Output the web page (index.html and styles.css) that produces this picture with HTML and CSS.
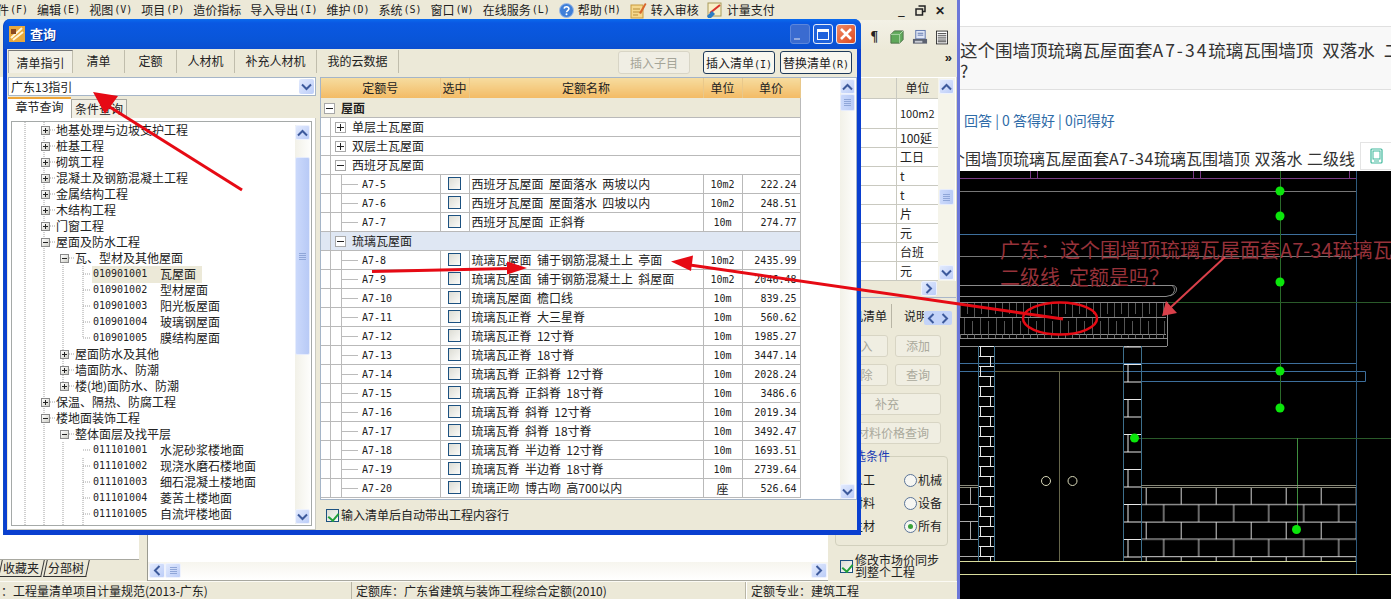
FILE: index.html
```html
<!DOCTYPE html>
<html lang="zh-CN">
<head>
<meta charset="utf-8">
<title>查询</title>
<link rel="stylesheet" href="styles.css">
</head>
<body>
<svg class="defs" width="0" height="0">
  <symbol id="chev-up" viewBox="0 0 11 8"><path d="M1 6.5 5.5 2 10 6.5" fill="none" stroke="#3d5a9c" stroke-width="2"/></symbol>
  <symbol id="chev-down" viewBox="0 0 11 8"><path d="M1 1.5 5.5 6 10 1.5" fill="none" stroke="#3d5a9c" stroke-width="2"/></symbol>
  <symbol id="chev-left" viewBox="0 0 8 11"><path d="M6.5 1 2 5.5 6.5 10" fill="none" stroke="#3d5a9c" stroke-width="2"/></symbol>
  <symbol id="chev-right" viewBox="0 0 8 11"><path d="M1.5 1 6 5.5 1.5 10" fill="none" stroke="#3d5a9c" stroke-width="2"/></symbol>
  <symbol id="grip" viewBox="0 0 9 7"><path d="M1 .5H8M1 2.5H8M1 4.5H8M1 6.5H8" stroke="#8fa6d8" fill="none"/></symbol>
</svg>

<div class="canvas">
  <div class="app">
    <div class="menubar">
      <span class="mi mi-first">件<b class="k">(F)</b></span>
      <span class="mi">编辑<b class="k">(E)</b></span>
      <span class="mi">视图<b class="k">(V)</b></span>
      <span class="mi">项目<b class="k">(P)</b></span>
      <span class="mi">造价指标</span>
      <span class="mi">导入导出<b class="k">(I)</b></span>
      <span class="mi">维护<b class="k">(D)</b></span>
      <span class="mi">系统<b class="k">(S)</b></span>
      <span class="mi">窗口<b class="k">(W)</b></span>
      <span class="mi">在线服务<b class="k">(L)</b></span>
      <span class="mi mi-icon">
        <svg width="15" height="15" viewBox="0 0 15 15"><circle cx="7.5" cy="7.5" r="7" fill="#3f7fd8" stroke="#9dbbe8"/><path d="M5.2 5.6c.3-2.4 4.8-2.4 4.7.2 0 1.700-2.400 1.800-2.400 3.500" fill="none" stroke="#fff" stroke-width="1.600"/><circle cx="7.500" cy="11.300" r="1" fill="#fff"/></svg>
        帮助<b class="k">(H)</b>
      </span>
      <span class="mi mi-icon">
        <svg width="17" height="17" viewBox="0 0 17 17"><rect x="1" y="3" width="12" height="13" fill="#f6d88c" stroke="#c89a3c"/><path d="M3 7h7M3 10h7M3 13h5" stroke="#b98f3a"/><path d="M9 11 15 1l1.500 1L11 12z" fill="#d8662c"/></svg>
        转入审核
      </span>
      <span class="mi mi-icon mi-last">
        <svg width="17" height="17" viewBox="0 0 17 17"><rect x="2" y="1" width="13" height="13" fill="#f8efc8" stroke="#a89a5a"/><path d="M4 11 14 3" stroke="#d8342c" stroke-width="2"/><path d="M1 14 6 9l3 3-4 4H2z" fill="#2c7cc4"/></svg>
        计量支付
      </span>
      <span class="win-btns">
        <span class="wb">_</span>
        <svg width="11" height="11" viewBox="0 0 11 11"><path d="M3.500 1h6.500v5.500H7.500M1 4h6.500v6H1z" fill="none" stroke="#222" stroke-width="1.500"/></svg>
        <span class="wb">✕</span>
      </span>
    </div>
    <div class="toolbar">
      <span class="pilcrow">¶</span>
      <svg width="14" height="16" viewBox="0 0 16 16"><path d="M1 5 5 1h10v10l-4 4H1z" fill="#5fa85a" stroke="#4c6d48"/><path d="M1 5h10v10M11 5l4-4" fill="none" stroke="#b7dcb2"/></svg>
      <svg width="16" height="17" viewBox="0 0 17 17"><rect x="4" y="1" width="10" height="9" fill="#dfe6f5" stroke="#5d75ab"/><path d="M6 4h6M6 6h6" stroke="#5d75ab"/><path d="M1 10h15v5H1z" fill="#5c6270"/><rect x="3" y="12" width="8" height="2" fill="#c9ccd4"/></svg>
      <svg width="12" height="15" viewBox="0 0 14 16"><rect x=".5" y=".5" width="13" height="15" fill="#fff" stroke="#222"/><path d="M2 3.500h10M2 6h10M2 8.500h10M2 11h10M2 13h10" stroke="#222"/></svg>
    </div>
    <div class="subbar"><span class="more">»</span></div>
    <div class="work">
      <div class="leftpane">
        <div class="leftpane-main"></div>
        <div class="doc-tabs"><span class="doc-tab">收藏夹</span><span class="doc-tab">分部树</span></div>
      </div>
      <div class="center">
        <div class="center-main"></div>
        <div class="hbar">
          <span class="sb-btn sb-h"><svg width="8" height="11"><use href="#chev-left"/></svg></span>
          <span class="sb-btn sb-h"><svg width="9" height="7"><use href="#grip"/></svg></span>
          <span class="hbar-fill"></span>
          <span class="sb-btn sb-h"><svg width="8" height="11"><use href="#chev-right"/></svg></span>
        </div>
      </div>
      <div class="rightcol">
        <div class="unit-panel">
          <div class="unit-table">
            <div class="ur ur-h"><span class="uc">单位</span></div>
            <div class="ur ur-tall"><span class="uc uc-num">100m2</span></div>
            <div class="ur"><span class="uc">100延</span></div>
            <div class="ur"><span class="uc">工日</span></div>
            <div class="ur"><span class="uc">t</span></div>
            <div class="ur"><span class="uc">t</span></div>
            <div class="ur"><span class="uc">片</span></div>
            <div class="ur"><span class="uc">元</span></div>
            <div class="ur"><span class="uc">台班</span></div>
            <div class="ur"><span class="uc">元</span></div>
          </div>
          <div class="unit-sb">
            <span class="sb-btn"><svg width="11" height="8"><use href="#chev-up"/></svg></span>
            <span class="sb-thumb unit-thumb"><svg width="9" height="7"><use href="#grip"/></svg></span>
            <span class="sb-fill"></span>
            <span class="sb-btn"><svg width="11" height="8"><use href="#chev-down"/></svg></span>
          </div>
        </div>
        <div class="unit-h"><span class="sb-btn sb-h"><svg width="8" height="11"><use href="#chev-right"/></svg></span></div>
        <div class="rtabs">
          <span class="rtab">工料机清单</span>
          <span class="rtab rtab-2">说明</span>
          <span class="rtab-arrows"><svg width="8" height="11"><use href="#chev-left"/></svg><svg width="8" height="11"><use href="#chev-right"/></svg></span>
        </div>
        <div class="rbtns">
          <span class="rbtn">插入</span><span class="rbtn rbtn-s">添加</span>
          <span class="rbtn">删除</span><span class="rbtn rbtn-s">查询</span>
          <span class="rbtn rbtn-w">补充</span>
          <span class="rbtn rbtn-w">人材料价格查询</span>
        </div>
        <div class="filter">
          <span class="filter-title">筛选条件</span>
          <div class="filter-grid">
            <span>人工</span><span class="radio-item"><i class="radio"></i>机械</span>
            <span>材料</span><span class="radio-item"><i class="radio"></i>设备</span>
            <span>主材</span><span class="radio-item"><i class="radio radio-on"></i>所有</span>
          </div>
        </div>
        <div class="sync"><i class="check check-on"></i><span>修改市场价同步<br>到整个工程</span></div>
      </div>
    </div>
    <div class="status">
      <span class="st st-1">：工程量清单项目计量规范(2013-广东)</span>
      <span class="st st-2">定额库：广东省建筑与装饰工程综合定额(2010)</span>
      <span class="st st-3">定额专业：建筑工程</span>
    </div>
  </div>

  <div class="dialog">
    <div class="titlebar">
      <svg class="title-icon" width="16" height="16" viewBox="0 0 16 16"><rect width="16" height="16" fill="#e8a83c"/><path d="M2 12 13 2M4 14 14 6" stroke="#fff6d8" stroke-width="2"/><rect x="2" y="3" width="5" height="5" fill="#8a4a20"/></svg>
      <span class="title-text">查询</span>
      <span class="title-btns">
        <span class="tbtn tbtn-min"><i></i></span>
        <span class="tbtn tbtn-max"><i></i></span>
        <span class="tbtn tbtn-close">
          <svg width="14" height="14" viewBox="0 0 14 14"><path d="M2 2 12 12M12 2 2 12" stroke="#fff" stroke-width="2.600"/></svg>
        </span>
      </span>
    </div>
    <div class="client">
      <div class="tabbar">
        <span class="tab tab-on">清单指引</span>
        <span class="tab tab-2">清单</span>
        <span class="tab tab-2">定额</span>
        <span class="tab tab-3">人材机</span>
        <span class="tab tab-4">补充人材机</span>
        <span class="tab tab-4">我的云数据</span>
        <span class="btn btn-off">插入子目</span>
        <span class="btn btn-on btn-gap">插入清单<b class="k">(I)</b></span>
        <span class="btn btn-on">替换清单<b class="k">(R)</b></span>
      </div>
      <div class="body">
        <div class="leftcol">
          <div class="combo"><span>广东13指引</span><span class="combo-btn"><svg width="11" height="8"><use href="#chev-down"/></svg></span></div>
          <div class="inner-tabs"><span class="itab itab-on">章节查询</span><span class="itab">条件查询</span></div>
          <div class="page">
            <div class="tree">
              <svg class="tree-lines" width="286" height="405" viewBox="12 122 286 405">
                <path d="M25 122V527M44 122V527M63 265V386M63 442V527M83 266V338M83 458V527" fill="none" stroke="#a0a0a0" stroke-dasharray="1 1"/>
                <path d="M50 130h5M50 146h5M50 162h5M50 178h5M50 194h5M50 210h5M50 226h5M50 242h5M50 402h5M50 418h5M69 258h5M69 354h5M69 370h5M69 386h5M69 434h5M83 274h8M83 290h8M83 306h8M83 322h8M83 338h8M83 450h8M83 466h8M83 482h8M83 498h8M83 514h8" fill="none" stroke="#a0a0a0" stroke-dasharray="1 1"/>
              </svg>
              <div class="tree-list">
                <div class="tr l1"><i class="exp plus"></i><span>地基处理与边坡支护工程</span></div>
                <div class="tr l1"><i class="exp plus"></i><span>桩基工程</span></div>
                <div class="tr l1"><i class="exp plus"></i><span>砌筑工程</span></div>
                <div class="tr l1"><i class="exp plus"></i><span>混凝土及钢筋混凝土工程</span></div>
                <div class="tr l1"><i class="exp plus"></i><span>金属结构工程</span></div>
                <div class="tr l1"><i class="exp plus"></i><span>木结构工程</span></div>
                <div class="tr l1"><i class="exp plus"></i><span>门窗工程</span></div>
                <div class="tr l1"><i class="exp"></i><span>屋面及防水工程</span></div>
                <div class="tr l2"><i class="exp"></i><span>瓦、型材及其他屋面</span></div>
                <div class="tr l3"><span class="leaf leaf-on"><span class="code">010901001</span><span>瓦屋面</span></span></div>
                <div class="tr l3"><span class="leaf"><span class="code">010901002</span><span>型材屋面</span></span></div>
                <div class="tr l3"><span class="leaf"><span class="code">010901003</span><span>阳光板屋面</span></span></div>
                <div class="tr l3"><span class="leaf"><span class="code">010901004</span><span>玻璃钢屋面</span></span></div>
                <div class="tr l3"><span class="leaf"><span class="code">010901005</span><span>膜结构屋面</span></span></div>
                <div class="tr l2"><i class="exp plus"></i><span>屋面防水及其他</span></div>
                <div class="tr l2"><i class="exp plus"></i><span>墙面防水、防潮</span></div>
                <div class="tr l2"><i class="exp plus"></i><span>楼(地)面防水、防潮</span></div>
                <div class="tr l1"><i class="exp plus"></i><span>保温、隔热、防腐工程</span></div>
                <div class="tr l1"><i class="exp"></i><span>楼地面装饰工程</span></div>
                <div class="tr l2"><i class="exp"></i><span>整体面层及找平层</span></div>
                <div class="tr l3"><span class="leaf"><span class="code">011101001</span><span>水泥砂浆楼地面</span></span></div>
                <div class="tr l3"><span class="leaf"><span class="code">011101002</span><span>现浇水磨石楼地面</span></span></div>
                <div class="tr l3"><span class="leaf"><span class="code">011101003</span><span>细石混凝土楼地面</span></span></div>
                <div class="tr l3"><span class="leaf"><span class="code">011101004</span><span>菱苦土楼地面</span></span></div>
                <div class="tr l3"><span class="leaf"><span class="code">011101005</span><span>自流坪楼地面</span></span></div>
              </div>
              <div class="vbar tree-bar">
                <span class="sb-btn"><svg width="11" height="8"><use href="#chev-up"/></svg></span>
                <span class="sb-fill sb-fill-a"></span>
                <span class="sb-thumb tree-thumb"><svg width="9" height="7"><use href="#grip"/></svg></span>
                <span class="sb-fill"></span>
                <span class="sb-btn"><svg width="11" height="8"><use href="#chev-down"/></svg></span>
              </div>
            </div>
          </div>
        </div>
        <div class="rightmain">
          <div class="gridwrap">
            <table class="grid">
              <colgroup><col class="c1"><col class="c2"><col class="c3"><col class="c4"><col class="c5"></colgroup>
              <thead><tr><th>定额号</th><th>选中</th><th>定额名称</th><th>单位</th><th>单价</th></tr></thead>
              <tbody>
                <tr class="g g-root"><td colspan="5"><i class="gexp"></i><b>屋面</b></td></tr>
                <tr class="g"><td colspan="5"><i class="gexp plus"></i>单层土瓦屋面</td></tr>
                <tr class="g"><td colspan="5"><i class="gexp plus"></i>双层土瓦屋面</td></tr>
                <tr class="g"><td colspan="5"><i class="gexp"></i>西班牙瓦屋面</td></tr>
                <tr><td class="no">A7-5</td><td class="cc"><i class="check"></i></td><td class="nm">西班牙瓦屋面  屋面落水  两坡以内</td><td class="un">10m2</td><td class="pr">222.24</td></tr>
                <tr><td class="no">A7-6</td><td class="cc"><i class="check"></i></td><td class="nm">西班牙瓦屋面  屋面落水  四坡以内</td><td class="un">10m2</td><td class="pr">248.51</td></tr>
                <tr><td class="no">A7-7</td><td class="cc"><i class="check"></i></td><td class="nm">西班牙瓦屋面  正斜脊</td><td class="un">10m</td><td class="pr">274.77</td></tr>
                <tr class="g g-sel"><td colspan="5"><i class="gexp"></i>琉璃瓦屋面</td></tr>
                <tr><td class="no">A7-8</td><td class="cc"><i class="check"></i></td><td class="nm">琉璃瓦屋面  铺于钢筋混凝土上  亭面</td><td class="un">10m2</td><td class="pr">2435.99</td></tr>
                <tr><td class="no">A7-9</td><td class="cc"><i class="check"></i></td><td class="nm">琉璃瓦屋面  铺于钢筋混凝土上  斜屋面</td><td class="un">10m2</td><td class="pr">2046.48</td></tr>
                <tr><td class="no">A7-10</td><td class="cc"><i class="check"></i></td><td class="nm">琉璃瓦屋面  檐口线</td><td class="un">10m</td><td class="pr">839.25</td></tr>
                <tr><td class="no">A7-11</td><td class="cc"><i class="check"></i></td><td class="nm">琉璃瓦正脊  大三星脊</td><td class="un">10m</td><td class="pr">560.62</td></tr>
                <tr><td class="no">A7-12</td><td class="cc"><i class="check"></i></td><td class="nm">琉璃瓦正脊  12寸脊</td><td class="un">10m</td><td class="pr">1985.27</td></tr>
                <tr><td class="no">A7-13</td><td class="cc"><i class="check"></i></td><td class="nm">琉璃瓦正脊  18寸脊</td><td class="un">10m</td><td class="pr">3447.14</td></tr>
                <tr><td class="no">A7-14</td><td class="cc"><i class="check"></i></td><td class="nm">琉璃瓦脊  正斜脊  12寸脊</td><td class="un">10m</td><td class="pr">2028.24</td></tr>
                <tr><td class="no">A7-15</td><td class="cc"><i class="check"></i></td><td class="nm">琉璃瓦脊  正斜脊  18寸脊</td><td class="un">10m</td><td class="pr">3486.6</td></tr>
                <tr><td class="no">A7-16</td><td class="cc"><i class="check"></i></td><td class="nm">琉璃瓦脊  斜脊  12寸脊</td><td class="un">10m</td><td class="pr">2019.34</td></tr>
                <tr><td class="no">A7-17</td><td class="cc"><i class="check"></i></td><td class="nm">琉璃瓦脊  斜脊  18寸脊</td><td class="un">10m</td><td class="pr">3492.47</td></tr>
                <tr><td class="no">A7-18</td><td class="cc"><i class="check"></i></td><td class="nm">琉璃瓦脊  半边脊  12寸脊</td><td class="un">10m</td><td class="pr">1693.51</td></tr>
                <tr><td class="no">A7-19</td><td class="cc"><i class="check"></i></td><td class="nm">琉璃瓦脊  半边脊  18寸脊</td><td class="un">10m</td><td class="pr">2739.64</td></tr>
                <tr><td class="no">A7-20</td><td class="cc"><i class="check"></i></td><td class="nm">琉璃正吻  博古吻  高700以内</td><td class="un un-cjk">座</td><td class="pr">526.64</td></tr>
              </tbody>
            </table>
            <div class="vbar grid-bar">
              <span class="sb-btn"><svg width="11" height="8"><use href="#chev-up"/></svg></span>
              <span class="sb-thumb grid-thumb"><svg width="9" height="7"><use href="#grip"/></svg></span>
              <span class="sb-fill"></span>
              <span class="sb-btn"><svg width="11" height="8"><use href="#chev-down"/></svg></span>
            </div>
          </div>
          <div class="footer"><i class="check check-on"></i><span>输入清单后自动带出工程内容行</span></div>
        </div>
      </div>
    </div>
  </div>

  <div class="browser">
    <div class="b-top"></div>
    <div class="b-head">
      <div class="b-line">这个围墙顶琉璃瓦屋面套<span class="lat">A7-34</span>琉璃瓦围墙顶 双落水 二级线</div>
      <div class="b-line">?</div>
    </div>
    <div class="b-stats">回答 | 0 答得好 | 0问得好</div>
    <div class="b-sub">
      <span class="b-subtext">个围墙顶琉璃瓦屋面套<span class="lat-s">A7-34</span>琉璃瓦围墙顶 双落水 二级线</span>
      <span class="b-phone"><svg width="13" height="16" viewBox="0 0 13 16"><rect x="1" y="1" width="11" height="14" rx="1" fill="none" stroke="#3fb89c" stroke-width="1.200"/><rect x="3" y="3" width="7" height="8" fill="none" stroke="#3fb89c"/><path d="M4 13h5" stroke="#3fb89c"/></svg></span>
    </div>
    <div class="cad">
      <svg class="cad-svg" width="431" height="428" viewBox="960 171 431 428">
        <defs>
          <pattern id="brickA" patternUnits="userSpaceOnUse" x="978" y="346" width="17" height="20">
            <path d="M0 .5H17M0 10.500H17M2.500 0V10M12.500 10V20" stroke="#e8e8e8" fill="none"/>
          </pattern>
          <pattern id="brickB" patternUnits="userSpaceOnUse" x="1123" y="364" width="18" height="35">
            <path d="M0 .5H18M0 18H18M5 0V18" stroke="#e8e8e8" fill="none"/>
          </pattern>
          <pattern id="brickW" patternUnits="userSpaceOnUse" x="1145.700" y="487" width="35" height="34.600">
            <path d="M0 .5H35M0 17.500H35M.5 0V17M18 17.500V34.600" stroke="#d4d4d4" fill="none"/>
          </pattern>
          <pattern id="tile1" patternUnits="userSpaceOnUse" x="960" y="303" width="14" height="14">
            <path d="M.5 0V14M7.500 0V11" stroke="#555" fill="none"/>
          </pattern>
          <pattern id="tile2" patternUnits="userSpaceOnUse" x="964" y="318" width="16" height="16">
            <path d="M.5 0V16M8.500 3V16" stroke="#555" fill="none"/>
          </pattern>
          <pattern id="tick" patternUnits="userSpaceOnUse" x="960" y="334" width="7" height="4">
            <path d="M.5 0V4" stroke="#666"/>
          </pattern>
        </defs>
        <g fill="none">
          <path d="M960 178.500H1356M1030.500 171V178M1037.500 171V178M1193.500 171V178M1200.500 171V178M1349.500 171V178M1356.500 171V178" stroke="#7a3a86"/>
          <path d="M960 191.500H1356M960 256.500H1356" stroke="#777"/>
          <path d="M960 234.500H1356M960 363.500H1356M960 371.500H1365.500V381.500H1141" stroke="#3d6f9c"/>
          <path d="M1356.500 171V574" stroke="#2e5a7e"/>
          <path d="M1280.500 171V408" stroke="#2a6a2a"/>
          <path d="M1166 302.500H1391M1134 438.500H1391" stroke="#2a5a2a"/>
          <path d="M1297.500 438V529" stroke="#3f8f3f"/>
          <path d="M995 371.500H1123M1059.500 371V561" stroke="#66664a"/>
          <path d="M960 285.500H1172C1178 285 1178 293 1172 295L1166 296.500H960M1172 285.500C1176 288 1175 293 1170 296" stroke="#8a8a8a"/>
          <path d="M960 302.500H1166M960 317.500H1166M960 334.500H1166M960 338.500H1167M960 346.500H1167M1167.500 302V346" stroke="#8a8a8a"/>
          <rect x="960" y="303" width="206" height="14" fill="url(#tile1)"/>
          <rect x="960" y="318" width="206" height="16" fill="url(#tile2)"/>
          <rect x="960" y="334" width="206" height="4" fill="url(#tick)"/>
          <rect x="978" y="346" width="17" height="215" fill="url(#brickA)"/>
          <rect x="1123" y="346" width="18" height="215" fill="url(#brickB)"/>
          <rect x="1141" y="487" width="215" height="74" fill="url(#brickW)"/>
          <path d="M978.500 346V561M994.500 346V561M1123.500 346V561M1141.500 346V561" stroke="#3d6f8c"/>
          <path d="M960 485.500H978M1141 485.500H1356M960 487.500H978M1141 487.500H1356" stroke="#8a8a7a"/>
          <path d="M960 504.500H978M960 521.500H978M960 539.500H978M960 556.500H978M970.500 487V504M970.500 521V539" stroke="#aaa"/>
          <path d="M960 561.500H1356M960 574.500H1391" stroke="#d8dc9c"/>
          <circle cx="1046" cy="481" r="4.500" stroke="#d8d8b8"/>
          <circle cx="1072.500" cy="481" r="4.500" stroke="#d8d8b8"/>
        </g>
        <g fill="#0be60b">
          <circle cx="1280" cy="191" r="4.500"/><circle cx="1280" cy="216" r="4.500"/><circle cx="1280" cy="282" r="4.500"/><circle cx="1280" cy="371" r="4.500"/><circle cx="1280" cy="408" r="4.500"/><circle cx="1134.500" cy="438" r="4.500"/><circle cx="1296.500" cy="529.500" r="4.500"/>
        </g>
      </svg>
      <div class="cad-note">
        <div class="cad-line">广东：这个围墙顶琉璃瓦屋面套A7-34琉璃瓦</div>
        <div class="cad-line">二级线  定额是吗？</div>
      </div>
    </div>
  </div>

  <svg class="marks" width="1391" height="599" viewBox="0 0 1391 599">
    <g fill="#e60a14" stroke="none">
      <path d="M242 190 105 104" stroke="#e60a14" stroke-width="3" fill="none"/>
      <path d="M93 92 118 96 105 114z"/>
      <path d="M372 271.500 510 268.500" stroke="#e60a14" stroke-width="3" fill="none"/>
      <path d="M527 268 507 261.500 507 274.500z"/>
      <path d="M1063 319 690 265" stroke="#e60a14" stroke-width="3" fill="none"/>
      <path d="M671 261.500 693 255.500 691 271z"/>
    </g>
    <ellipse cx="1060" cy="318.500" rx="37" ry="16" fill="none" stroke="#e60a14" stroke-width="2.500"/>
    <path d="M1225 257 1170 308" stroke="#d9404a" stroke-width="2" fill="none"/>
    <path d="M1162 316 1166 301 1177 313z" fill="#d9404a"/>
  </svg>
</div>
</body>
</html>
```

FILE: styles.css
```css
* { box-sizing: border-box; }
html, body { margin: 0; padding: 0; }
body {
  width: 1391px;
  height: 599px;
  overflow: hidden;
  background: #ece9d8;
  font: 12px/16px "Noto Sans CJK SC", "Liberation Sans", sans-serif;
  color: #222;
}
i { font-style: normal; display: block; flex: none; }
.defs { position: absolute; }
.canvas { position: relative; width: 1391px; height: 599px; overflow: hidden; }

/* underlying application */
.app { width: 957px; height: 599px; display: flex; flex-direction: column; background: #ece9d8; }
.menubar { height: 20px; flex: none; display: flex; align-items: center; gap: 9px; padding-right: 12px; white-space: nowrap; }
.mi { display: flex; align-items: center; }
.mi-first { margin-left: -3px; }
.mi-icon svg { margin-right: 4px; }
.mi-last { margin-left: -2px; }
.k { font: 400 10px/16px "DejaVu Sans Mono", monospace; margin-left: 1px; }
.win-btns { margin-left: auto; display: flex; align-items: center; gap: 8px; font-weight: 700; }
.wb { width: 11px; text-align: center; }
.toolbar { height: 30px; flex: none; display: flex; align-items: center; justify-content: flex-end; gap: 8px; padding: 4px 9px 0 0; background: linear-gradient(#f3f1e6, #ece9d8); }
.pilcrow { font: 700 14px/16px "Liberation Serif", serif; margin-right: 4px; }
.subbar { height: 27px; flex: none; display: flex; justify-content: flex-end; padding: 0 5px; }
.more { font: 700 13px/16px "Liberation Sans", sans-serif; }
.work { flex: 1; display: flex; min-height: 0; }
.leftpane { width: 148px; flex: none; display: flex; flex-direction: column; border-right: 1px solid #9a9a90; }
.leftpane-main { height: 483px; background: #fff; margin-right: 8px; border-bottom: 1px solid #a8a8a0; flex: none; }
.doc-tabs { display: flex; gap: 8px; padding: 0 0 0 3px; }
.doc-tab { height: 17px; width: 37px; line-height: 15px; position: relative; white-space: nowrap; }
.doc-tab::after { content: ""; position: absolute; left: -3px; right: -3px; top: 0; bottom: 0; border: solid #333; border-width: 0 1px 1px; transform: skewX(-12deg); }
.center { flex: 1; min-width: 0; display: flex; flex-direction: column; }
.center-main { flex: 1; background: #fff; }
.hbar { height: 19px; flex: none; display: flex; align-items: center; background: linear-gradient(#f6f5ee, #fff); padding: 0 1px 2px; border-bottom: 1px solid #a8a8a0; }
.hbar-fill { flex: 1; }
.rightcol { width: 129px; flex: none; display: flex; flex-direction: column; background: #ece9d8; border-right: 1px solid #d8d6c6; overflow: hidden; }
.unit-panel { height: 204px; display: flex; padding-top: 1px; background: #fff; flex: none; }
.unit-table { width: 110px; flex: none; }
.ur { height: 19px; display: flex; justify-content: flex-end; border-bottom: 1px solid #c9c9c0; }
.ur-h { height: 21px; background: #ece9d8; }
.ur-h .uc { text-align: center; padding-left: 0; line-height: 20px; }
.ur-tall { height: 30px; }
.uc { width: 42px; border-left: 1px solid #c9c9c0; padding-left: 3px; line-height: 18px; white-space: nowrap; overflow: hidden; }
.ur-tall .uc { line-height: 29px; }
.uc-num { font-size: 11px; }
.unit-sb { width: 17px; flex: none; display: flex; flex-direction: column; background: #f5f4ea; padding: 1px; }
.unit-thumb { height: 16px; margin-top: 95px; flex: none; }
.unit-h { height: 17px; flex: none; display: flex; justify-content: flex-end; padding-right: 19px; background: #ece9d8; border-bottom: 1px solid #a9b6c8; }
.rtabs { height: 36px; flex: none; display: flex; align-items: center; padding: 0 4px 0 0; justify-content: flex-end; white-space: nowrap; }
.rtab { width: 65px; text-align: right; padding-right: 8px; border-right: 1px solid #b8b5a5; line-height: 24px; flex: none; }
.rtab-2 { width: 32px; border: 0; padding: 0 0 0 12px; overflow: hidden; text-align: left; }
.rtab-arrows { width: 28px; height: 14px; flex: none; background: #c3d3f8; border-radius: 2px; display: flex; justify-content: space-around; align-items: center; margin-top: 4px; }
.rbtns { display: grid; grid-template-columns: 55px 46px; column-gap: 7px; row-gap: 7px; padding: 1px 0 0 5px; flex: none; }
.rbtn { height: 22px; border: 1px solid #d8d5c4; border-radius: 3px; background: #f0eee2; color: #aaa99c; text-align: center; line-height: 20px; white-space: nowrap; }
.rbtn-s { width: 46px; }
.rbtn-w { grid-column: 1 / 3; }
.filter { margin: 12px 8px 0 7px; height: 90px; border: 1px solid #d2d0bd; border-radius: 4px; position: relative; flex: none; }
.filter-title { position: absolute; left: 2px; top: -9px; width: 52px; text-align: right; background: #ece9d8; color: #1a3cb4; line-height: 16px; white-space: nowrap; }
.filter-grid { display: grid; grid-template-columns: 53px 1fr; row-gap: 5px; padding: 14px 0 0 15px; white-space: nowrap; }
.filter-grid > span { line-height: 18px; }
.radio-item { display: flex; align-items: center; gap: 1px; }
.radio { width: 13px; height: 13px; border-radius: 50%; border: 1px solid #5a7498; background: #f6f6f2; position: relative; }
.radio-on::after { content: ""; position: absolute; left: 3px; top: 3px; width: 5px; height: 5px; border-radius: 50%; background: #3aa23a; }
.sync { display: flex; align-items: center; gap: 2px; padding: 8px 0 0 12px; line-height: 12px; white-space: nowrap; flex: none; }
.check { width: 13px; height: 13px; border: 1px solid #1c5180; background: linear-gradient(135deg, #dcdcd4, #fbfbf8); position: relative; }
.check-on::after { content: ""; position: absolute; left: 3px; top: 1px; width: 5px; height: 8px; border: solid #22a03a; border-width: 0 2px 2px 0; transform: rotate(40deg); }
.status { height: 18px; flex: none; display: flex; border-top: 1px solid #fbfaf4; background: #ece9d8; white-space: nowrap; line-height: 17px; }
.st { border-right: 1px solid #b8b5a5; overflow: hidden; }
.st-1 { width: 352px; padding-left: 1px; }
.st-2 { width: 394px; padding-left: 4px; }
.st-3 { flex: 1; padding-left: 4px; border: 0; border-left: 1px solid #fff; }

/* scrollbars */
.sb-btn { width: 15px; height: 15px; flex: none; background: linear-gradient(135deg, #e2eafd, #bccdf8); border: 1px solid #eef2fd; border-radius: 2px; display: flex; align-items: center; justify-content: center; }
.sb-h { width: 16px; height: 15px; }
.sb-thumb { display: flex; align-items: center; justify-content: center; width: 15px; background: linear-gradient(90deg, #cbd9fb, #b8caf6); border: 1px solid #e6ecfc; border-radius: 2px; }
.sb-fill { flex: 1; }
.sb-fill-a { flex: none; height: 17px; }
.vbar { width: 15px; display: flex; flex-direction: column; background: linear-gradient(90deg, #f2f1e8, #fdfdfb); flex: none; }

/* dialog */
.dialog { position: absolute; left: 3px; top: 19px; width: 858px; height: 516px; display: flex; flex-direction: column; background: #0a3fd0; border-radius: 7px 7px 0 0; padding: 0 4px 5px 3px; border-left: 1px solid #0d4ac4; }
.titlebar { height: 30px; flex: none; display: flex; align-items: center; margin: 0 -4px 0 -3px; padding: 0 5px; border-radius: 7px 7px 0 0; background: linear-gradient(#0a6bee 0, #0a58e2 4px, #0955d8 70%, #0b4ed0); }
.title-icon { flex: none; }
.title-text { margin-left: 5px; color: #fff; font-weight: 700; font-size: 13px; text-shadow: 1px 1px 0 #0a2f90; }
.title-btns { margin-left: auto; display: flex; gap: 3px; }
.tbtn { width: 20px; height: 20px; border: 1px solid #e6ecfa; border-radius: 3px; display: flex; align-items: center; justify-content: center; }
.tbtn-min { background: #3a6bd0; border-color: #5c86dc; }
.tbtn-min i { width: 6px; height: 2px; background: #8fa8e0; margin: 9px 7px 0 0; }
.tbtn-max { background: #1f62dc; }
.tbtn-max i { width: 12px; height: 11px; border: 1px solid #fff; border-top-width: 3px; }
.tbtn-close { background: linear-gradient(135deg, #f08a66, #dd4a20); }
.client { flex: 1; min-height: 0; display: flex; flex-direction: column; background: #ece9d8; }
.tabbar { height: 28px; flex: none; display: flex; align-items: flex-start; padding-left: 1px; white-space: nowrap; }
.tab { height: 23px; line-height: 21px; text-align: center; border-right: 1px solid #c0bdac; margin-top: 1px; flex: none; }
.tab-on { width: 65px; background: #f2f0e6; border-top: 1px solid #777; border-left: 1px solid #aaa; padding-top: 1px; }
.tab-2 { width: 52px; }
.tab-3 { width: 58px; }
.tab-4 { width: 82px; }
.btn { height: 23px; width: 72px; border-radius: 3px; text-align: center; line-height: 21px; margin-top: 2px; flex: none; }
.btn-off { margin-left: 219px; background: #f0eee4; border: 1px solid #d8d5c6; color: #a5a598; }
.btn-on { background: #f8f7f0; border: 1px solid #1e3a5a; margin-left: 5px; }
.btn-gap { margin-left: 13px; }
.btn .k { margin-left: 0; }
.body { flex: 1; min-height: 0; display: flex; gap: 4px; padding-left: 1px; }
.leftcol { width: 308px; flex: none; display: flex; flex-direction: column; }
.combo { height: 19px; flex: none; display: flex; align-items: center; justify-content: space-between; background: #fff; border: 1px solid #a5b5c8; padding: 0 1px 0 2px; }
.combo-btn { width: 15px; height: 15px; background: linear-gradient(135deg, #e2eafd, #bccdf8); display: flex; align-items: center; justify-content: center; border-radius: 2px; }
.inner-tabs { height: 22px; flex: none; display: flex; align-items: flex-end; }
.itab { width: 56px; height: 19px; text-align: center; line-height: 18px; background: #f2f0e6; border: 1px solid #a8a8a0; border-bottom: 0; flex: none; }
.itab-on { width: 63px; height: 21px; background: #fff; border: 0; border-top: 2px solid #eda53a; line-height: 16px; }
.page { flex: 1; min-height: 0; background: #fff; padding: 3px; border: solid #c9c9c0; border-width: 0 1px 1px 0; }
.tree { height: 100%; border: 1px solid #a5a9a8; display: flex; position: relative; padding-right: 1px; overflow: hidden; }
.tree-lines { position: absolute; left: 0; top: 0; }
.tree-list { flex: 1; min-width: 0; position: relative; }
.tr { height: 16px; display: flex; align-items: center; white-space: nowrap; }
.l1 { padding-left: 29px; }
.l2 { padding-left: 48px; }
.l3 { padding-left: 80px; }
.exp { width: 9px; height: 9px; margin-right: 6px; border: 1px solid #8a8a8a; background: linear-gradient(135deg, #fff, #cfcfc8); position: relative; }
.exp::before { content: ""; position: absolute; left: 1px; right: 1px; top: 3px; height: 1px; background: #222; }
.plus::after { content: ""; position: absolute; top: 1px; bottom: 1px; left: 3px; width: 1px; background: #222; }
.leaf { display: flex; height: 17px; align-items: center; min-width: 109px; padding: 0 6px 0 1px; }
.leaf-on { background: #ece9d8; }
.code { font: 10px/16px "DejaVu Sans Mono", monospace; width: 67px; flex: none; }
.vbar.tree-bar { margin-top: 3px; height: 399px; }
.tree-thumb { height: 198px; flex: none; }
.rightmain { flex: 1; min-width: 0; display: flex; flex-direction: column; }
.gridwrap { height: 423px; flex: none; background: #fff; border: 1px solid #a5b5c8; display: flex; justify-content: space-between; padding-right: 1px; }
.grid { border-collapse: collapse; table-layout: fixed; width: 479px; height: 0; flex: none; }
.c1 { width: 119px; } .c2 { width: 29px; } .c3 { width: 234px; } .c4 { width: 39px; } .c5 { width: 58px; }
.grid th { height: 20px; padding: 0 0 2px; font-weight: 400; text-align: center; background: linear-gradient(#f6dc9f, #f3bb65); border-right: 1px solid #e9c88a; line-height: 17px; }
.grid td { height: 19px; padding: 0; border: 1px solid #b9b9b9; border-top: 0; line-height: 17px; overflow: hidden; white-space: pre; }
.g td { border-left: 0; border-right: 1px solid #b9b9b9; padding-left: 14px; background: linear-gradient(#bbb, #bbb) 9px 0 / 1px 100% no-repeat #fff; }
.gexp { display: inline-block; width: 11px; height: 11px; margin-right: 6px; vertical-align: -1px; border: 1px solid #a8a8a8; background: #fff; position: relative; }
.gexp::before { content: ""; position: absolute; left: 1px; right: 1px; top: 4px; height: 1px; background: #222; }
.gexp.plus::after { top: 1px; bottom: 1px; left: 4px; }
.g-root td { background: #ece9d8; padding-left: 3px; }
.g-sel td { background: linear-gradient(#bbb, #bbb) 9px 0 / 1px 100% no-repeat #dfe7f3; }
.grid td.no { font: 10px/17px "DejaVu Sans Mono", monospace; padding: 1px 0 0 41px; border-left: 0; background: linear-gradient(#bbb, #bbb) 9px 0 / 1px 100% no-repeat, linear-gradient(#bbb, #bbb) 20px 0 / 1px 100% no-repeat, linear-gradient(#bbb, #bbb) 21px 9px / 16px 1px no-repeat; }
.cc .check { margin: 0 auto; }
.grid td.nm { padding-left: 2px; }
.grid td.un { text-align: center; padding-top: 1px; font: 10px/17px "DejaVu Sans Mono", monospace; }
.grid td.un-cjk { font: 12px/17px "Noto Sans CJK SC", sans-serif; }
.grid td.pr { text-align: right; padding: 1px 3px 0 0; font: 10px/17px "DejaVu Sans Mono", monospace; }
.vbar.grid-bar { margin-top: 1px; height: 420px; }
.grid-thumb { height: 17px; flex: none; }
.footer { flex: 1; display: flex; align-items: center; gap: 2px; padding-left: 6px; }

/* browser on the right */
.browser { position: absolute; left: 957px; top: 0; width: 434px; height: 599px; display: flex; flex-direction: column; background: #fff; border-left: 3px solid #6b76d8; overflow: hidden; }
.b-top { height: 26px; flex: none; }
.b-head { height: 64px; flex: none; background: #f8f8f8; border: solid #e0e0e0; border-width: 1px 0; padding-top: 12px; font-size: 17.500px; line-height: 21px; color: #333; white-space: nowrap; word-spacing: 5px; }
.lat { letter-spacing: 2px; }
.lat-s { letter-spacing: .6px; }
.b-stats { height: 54px; flex: none; padding: 20px 0 0 4px; font-size: 14px; line-height: 20px; color: #2f6ca8; white-space: nowrap; }
.b-sub { height: 27px; flex: none; display: flex; font-size: 16px; line-height: 22px; color: #333; white-space: nowrap; align-items: flex-start; }
.b-subtext { width: 400px; flex: none; overflow: hidden; text-indent: -11px; padding-top: 3px; word-spacing: 1px; }
.b-phone { flex: 1; height: 28px; border: 1px solid #e4e4e4; border-right: 0; background: #fff; display: flex; align-items: center; justify-content: center; margin-top: -2px; position: relative; z-index: 1; }
.cad { flex: 1; min-height: 0; background: #000; position: relative; overflow: hidden; }
.cad-svg { display: block; }
.cad-note { position: absolute; left: 40px; top: 65px; width: 400px; font-size: 20px; line-height: 27px; color: #97323a; }
.cad-line { white-space: pre; }

/* red annotations over everything */
.marks { position: absolute; left: 0; top: 0; pointer-events: none; }
```
